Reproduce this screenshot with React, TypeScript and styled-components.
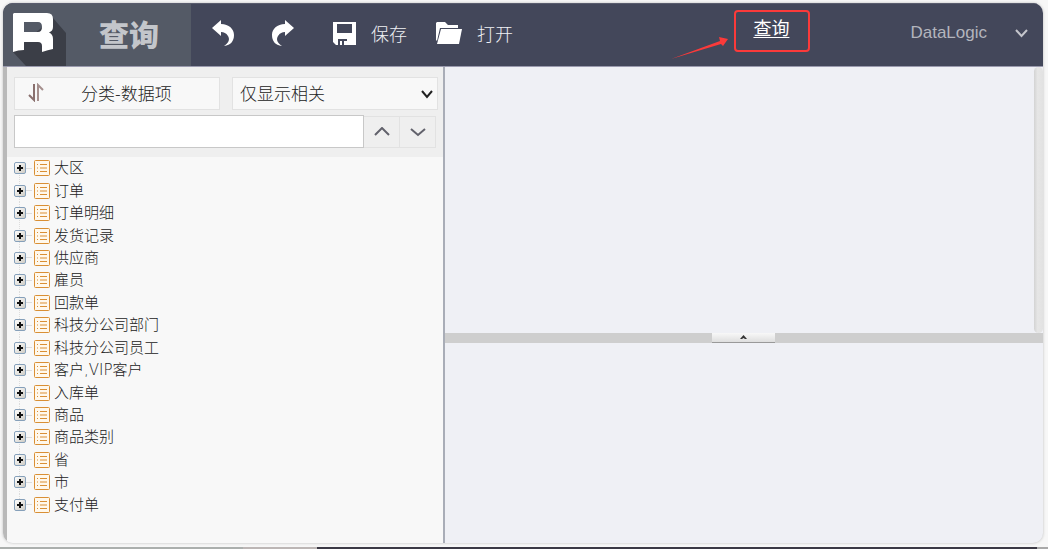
import React from "react";
import styled, { createGlobalStyle } from "styled-components";

const Global = createGlobalStyle`
  *, *::before, *::after { box-sizing: border-box; }
  body {
    margin: 0;
    background: #f7f7f7;
    color: #222;
    font-family: "Liberation Sans", "Noto Sans CJK SC", sans-serif;
    font-size: 15px;
  }
`;

const Page = styled.div`
  height: 100vh;
  display: flex;
  flex-direction: column;
  overflow: hidden;
`;

const Frame = styled.div`
  flex: 1;
  min-height: 0;
  margin: 3px 5px 4px 3px;
  display: flex;
  flex-direction: column;
  border-radius: 10px;
  overflow: hidden;
  background: #eff0f5;
  box-shadow: 0 0 3px #bbb;
`;

const Header = styled.header`
  height: 64px;
  flex: none;
  display: flex;
  background: #43475a;
  border-top: 1px solid #5a5d6e;
  border-bottom: 1px solid #9a9aae;
`;

const Brand = styled.div`
  width: 188px;
  flex: none;
  display: flex;
  background: #545a66;
`;

const BrandTitle = styled.h1`
  margin: 0;
  padding-left: 33px;
  font: 900 30px/58px "Noto Sans CJK SC", sans-serif;
  color: #c3c6cb;
`;

const Tools = styled.nav`
  flex: 1;
  display: flex;
  align-items: center;
  padding: 0 0 4px 20px;
`;

const ToolButton = styled.button<{ $width: number }>`
  width: ${(p) => p.$width}px;
  padding: 0;
  border: 0;
  background: none;
  display: flex;
  align-items: center;
  gap: 15px;
  color: #f0f1f4;
  font: 300 18px/28px "Noto Sans CJK SC", sans-serif;
  white-space: nowrap;
`;

const Callout = styled.div`
  display: flex;
  align-items: flex-end;
  align-self: flex-start;
  padding-top: 6px;
`;

const CalloutBox = styled.div`
  width: 76px;
  height: 42px;
  margin-left: 5px;
  padding-right: 2px;
  border: 2px solid #fb3a3a;
  border-radius: 4px;
  text-align: center;
`;

const QueryLink = styled.a`
  color: #fff;
  font: 400 18px/30px "Noto Sans CJK SC", sans-serif;
  text-underline-offset: 2px;
`;

const Arrow = styled.svg`
  flex: none;
  margin-bottom: -8px;
`;

const UserMenu = styled.button`
  margin-left: 100px;
  margin-right: 15px;
  padding: 0 0 4px;
  border: 0;
  background: none;
  display: flex;
  align-items: center;
  gap: 28px;
  color: #b3b5bd;
  font: 17px/24px "Liberation Sans", sans-serif;
`;

const Main = styled.main`
  flex: 1;
  min-height: 0;
  display: flex;
`;

const Sidebar = styled.aside`
  width: 442px;
  flex: none;
  display: flex;
  flex-direction: column;
  border-left: 4px solid #b9b9b9;
  border-right: 2px solid #a9adb7;
  background: #f8f8f8;
`;

const Filters = styled.div`
  display: grid;
  gap: 5px;
  padding: 10px 5px 9px 7px;
  background: #efefef;
`;

const FilterRow = styled.div`
  display: grid;
  grid-template-columns: repeat(2, minmax(0, 1fr));
  gap: 12px;
`;

const SortButton = styled.button`
  height: 33px;
  padding: 0 13px 2px;
  display: flex;
  align-items: center;
  gap: 36px;
  border: 1px solid #e2e2e2;
  background: #f8f8f8;
  color: #222;
  font: 300 17px/30px "Noto Sans CJK SC", sans-serif;
  white-space: nowrap;
`;

const SelectWrap = styled.div`
  display: grid;
  align-items: center;
  & > * { grid-area: 1 / 1; }
  & > svg { justify-self: end; margin-right: 5px; pointer-events: none; }
`;

const Select = styled.select`
  width: 100%;
  height: 33px;
  padding: 0 7px 2px;
  appearance: none;
  border: 1px solid #e2e2e2;
  border-radius: 0;
  background: #f8f8f8;
  color: #222;
  font: 300 17px/30px "Noto Sans CJK SC", sans-serif;
`;

const SearchRow = styled.div`
  display: flex;
  align-items: flex-end;
  padding-right: 2px;
`;

const SearchInput = styled.input`
  flex: 1;
  min-width: 0;
  height: 33px;
  padding: 0 7px;
  border: 1px solid #c8c8c8;
  background: #fff;
  font: 16px "Liberation Sans", "Noto Sans CJK SC", sans-serif;
`;

const StepButton = styled.button`
  width: 36px;
  height: 32px;
  padding: 0;
  display: grid;
  place-items: center;
  border: 1px solid #e2e2e2;
  border-left: 0;
  background: #efefef;
`;

const Tree = styled.ul`
  height: 359px;
  margin: 0;
  padding: 0 0 0 7px;
  list-style: none;
  display: grid;
  grid-auto-rows: 1fr;
`;

const TreeItem = styled.li`
  display: flex;
  align-items: center;
  color: #222;
  font: 300 15px/22px "DejaVu Sans", "Noto Sans CJK SC", sans-serif;
  background: linear-gradient(#ddd, #ddd) 12px 50% / 6px 1px no-repeat,
    repeating-linear-gradient(#ddd 0 1px, transparent 1px 2px) 5px 0 / 1px 100% no-repeat;
  &:first-child { background-position: 12px 50%, 5px 12px; }
  &:last-child { background-size: 6px 1px, 1px 12px; }
`;

const Expander = styled.button`
  width: 12px;
  height: 12px;
  margin-right: 8px;
  padding: 0;
  display: grid;
  place-items: center;
  border: 1px solid #86a0ba;
  border-radius: 2px;
  background: linear-gradient(135deg, #fff, #cfccc4);
`;

const NodeIcon = styled.svg`
  flex: none;
  margin-right: 4px;
`;

const Workspace = styled.section`
  flex: 1;
  min-width: 0;
  display: flex;
  flex-direction: column;
`;

const UpperPane = styled.div`
  flex: 4;
  display: flex;
  justify-content: flex-end;
`;

const ScrollTrack = styled.div`
  width: 9px;
  border-radius: 5px;
  background: linear-gradient(90deg, #d3d3d3, #e6e6e6 40%, #e2e2e2);
`;

const LowerPane = styled.div`
  flex: 3;
`;

const Splitter = styled.div`
  height: 10px;
  flex: none;
  display: flex;
  justify-content: center;
  padding-right: 2px;
  background: #cecece;
`;

const SplitHandle = styled.button`
  width: 63px;
  height: 10px;
  padding: 0;
  display: grid;
  place-items: center;
  border: 0;
  border-bottom: 1px solid #999;
  background: linear-gradient(#f8f8f8, #dedede);
`;

const BottomEdge = styled.footer`
  height: 2px;
  flex: none;
  background: linear-gradient(90deg, #abafad 0 243px, #bcb6b5 243px 317px, #3b3945 317px calc(100% - 11px), #a9a9a9 calc(100% - 11px));
`;

const nodes = [
  "大区", "订单", "订单明细", "发货记录", "供应商", "雇员", "回款单", "科技分公司部门",
  "科技分公司员工", "客户,VIP客户", "入库单", "商品", "商品类别", "省", "市", "支付单",
];

const Logo = () => (
  <svg width="63" height="62" viewBox="0 0 63 62" aria-hidden="true">
    <path d="M50 14 63 29V62H23L10 48Z" fill="#3b3e47" />
    <path
      fill="#fff"
      fillRule="evenodd"
      d="M11 9H44Q50 9 50 15V23Q50 27 46 28.500Q50 30 50 35V45Q45 46 39 48V42Q39 38 35 38H21V46Q15 46 10 48V10ZM21 18V28H35Q39 28 39 23Q39 18 35 18Z"
    />
  </svg>
);

const UndoIcon = ({ flip = false }: { flip?: boolean }) => (
  <svg width="24" height="28" viewBox="0 0 24 28" aria-hidden="true">
    <path
      transform={flip ? "translate(24 0) scale(-1 1)" : undefined}
      d="M1 9 10 1V5C18 5 23 10 23 16C23 22 20 26 13 27C18 24 19 20 17 17C15 14 13 13 10 13V17Z"
      fill="#fff"
    />
  </svg>
);

const SaveIcon = () => (
  <svg width="23" height="23" viewBox="0 0 23 23" aria-hidden="true">
    <path
      fill="#fff"
      fillRule="evenodd"
      d="M0 0H23V23H3L0 20ZM4 2V11H19V2ZM5 17V23H7V19H9V23H11V19H14V17Z"
    />
  </svg>
);

const FolderIcon = () => (
  <svg width="26" height="23" viewBox="0 0 26 23" aria-hidden="true">
    <path d="M0 1 1 0H9L12 3H22V6H4L1 19 0 18Z" fill="#fff" />
    <path d="M5 7H26L23 22H1Z" fill="#fff" />
  </svg>
);

const Chevron = ({ width, up, color, stroke }: { width: number; up?: boolean; color: string; stroke: number }) => (
  <svg width={width} height="10" viewBox={`0 0 ${width} 10`} aria-hidden="true">
    <path
      d={up ? `M1 8 ${width / 2} 1 ${width - 1} 8` : `M1 2 ${width / 2} 8 ${width - 1} 2`}
      fill="none"
      stroke={color}
      strokeWidth={stroke}
    />
  </svg>
);

export default function App() {
  return (
    <Page>
      <Global />
      <Frame>
        <Header>
          <Brand>
            <Logo />
            <BrandTitle>查询</BrandTitle>
          </Brand>
          <Tools>
            <ToolButton $width={60} aria-label="撤销"><UndoIcon /></ToolButton>
            <ToolButton $width={62} aria-label="重做"><UndoIcon flip /></ToolButton>
            <ToolButton $width={103}><SaveIcon />保存</ToolButton>
            <ToolButton $width={80}><FolderIcon />打开</ToolButton>
          </Tools>
          <Callout>
            <Arrow width="58" height="24" viewBox="0 0 58 24" aria-hidden="true">
              <path d="M0 23 49 5 48 1 57 3 52 10 50 8Z" fill="#fb3a3a" />
            </Arrow>
            <CalloutBox><QueryLink href="#query">查询</QueryLink></CalloutBox>
          </Callout>
          <UserMenu>
            DataLogic
            <Chevron width={13} color="#c4c5cb" stroke={2} />
          </UserMenu>
        </Header>
        <Main>
          <Sidebar>
            <Filters>
              <FilterRow>
                <SortButton>
                  <svg width="17" height="19" viewBox="0 0 17 19" aria-hidden="true">
                    <path d="M6 1V17L1 12" fill="none" stroke="#8a706e" strokeWidth="2" />
                    <path d="M10 18V2L15 7" fill="none" stroke="#a58f8d" strokeWidth="2" />
                  </svg>
                  分类-数据项
                </SortButton>
                <SelectWrap>
                  <Select aria-label="显示范围"><option>仅显示相关</option></Select>
                  <Chevron width={12} color="#222" stroke={2} />
                </SelectWrap>
              </FilterRow>
              <SearchRow>
                <SearchInput type="text" aria-label="搜索" />
                <StepButton aria-label="上一个"><Chevron width={16} up color="#62626c" stroke={2} /></StepButton>
                <StepButton aria-label="下一个"><Chevron width={16} color="#62626c" stroke={2} /></StepButton>
              </SearchRow>
            </Filters>
            <Tree>
              {nodes.map((name) => (
                <TreeItem key={name}>
                  <Expander aria-label={`展开${name}`}>
                    <svg width="8" height="8" viewBox="0 0 8 8" aria-hidden="true">
                      <path d="M1 4H7M4 1V7" stroke="#111" strokeWidth="2" />
                    </svg>
                  </Expander>
                  <NodeIcon width="16" height="16" viewBox="0 0 16 16" aria-hidden="true">
                    <rect x="0.500" y="0.500" width="15" height="15" rx="1" fill="#fff8ec" stroke="#d98f35" />
                    <path d="M3 4.500H4M3 8H4M3 11.500H4M6 4.500H13M6 8H13M6 11.500H13" stroke="#d98f35" />
                  </NodeIcon>
                  {name}
                </TreeItem>
              ))}
            </Tree>
          </Sidebar>
          <Workspace>
            <UpperPane><ScrollTrack /></UpperPane>
            <Splitter>
              <SplitHandle aria-label="折叠">
                <svg width="7" height="5" viewBox="0 0 7 5" aria-hidden="true">
                  <path d="M0 4 3.500 0 7 4H5L3.500 3 2 4Z" fill="#333" />
                </svg>
              </SplitHandle>
            </Splitter>
            <LowerPane />
          </Workspace>
        </Main>
      </Frame>
      <BottomEdge />
    </Page>
  );
}
